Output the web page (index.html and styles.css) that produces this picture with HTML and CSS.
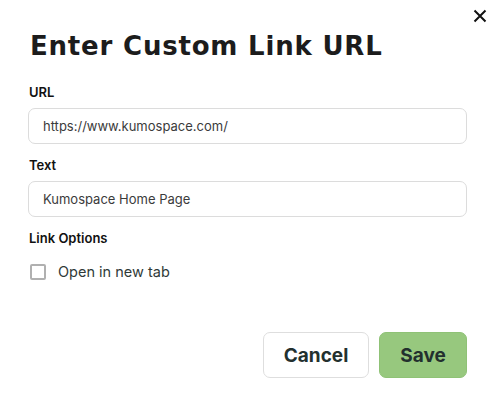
FILE: index.html
```html
<!DOCTYPE html>
<html>
<head>
<meta charset="utf-8">
<link rel="stylesheet" href="styles.css">
</head>
<body>
<div class="dialog">
  <button class="close" aria-label="Close">
    <svg width="14" height="14" viewBox="0 0 14 14"><path d="M1.5 1.5 L12.5 12.5 M12.5 1.5 L1.5 12.5" stroke="#111" stroke-width="2" fill="none"/></svg>
  </button>
  <h1 class="title">Enter Custom Link URL</h1>
  <div class="field">
    <label class="label">URL</label>
    <div class="input">https://www.kumospace.com/</div>
  </div>
  <div class="field">
    <label class="label">Text</label>
    <div class="input">Kumospace Home Page</div>
  </div>
  <div class="field">
    <div class="label">Link Options</div>
    <div class="check-row">
      <span class="checkbox"></span>
      <span class="check-text">Open in new tab</span>
    </div>
  </div>
  <div class="actions">
    <button class="btn btn-cancel">Cancel</button>
    <button class="btn btn-save">Save</button>
  </div>
</div>
</body>
</html>
```
FILE: styles.css
```css
* { box-sizing: border-box; }
html, body { margin: 0; padding: 0; background: #fff; }
body { font-family: Inter, "Noto Sans", sans-serif; color: #111; }
.dialog {
  position: relative;
  width: 494px;
  height: 400px;
  padding: 30px 27px 0 28px;
}
.close {
  position: absolute;
  top: 9px;
  right: 7px;
  width: 14px;
  height: 14px;
  padding: 0;
  border: 0;
  background: none;
  display: flex;
}
.title {
  margin: 0 0 0 2px;
  font-family: "DejaVu Sans", Inter, sans-serif;
  font-size: 26px;
  line-height: 32px;
  font-weight: 700;
  letter-spacing: 0.8px;
  color: #1c1c1c;
}
.field { margin-top: 22px; display: flex; flex-direction: column; }
.field + .field { margin-top: 13px; }
.label {
  font-size: 13px;
  line-height: 16px;
  font-weight: 600;
  color: #111;
  margin-left: 1px;
  margin-bottom: 8px;
}
.input {
  height: 36px;
  border: 1px solid #dcdcdc;
  border-radius: 7px;
  padding: 0 14px;
  display: flex;
  align-items: center;
  font-size: 13px;
  color: #3b3b3b;
}
.check-row {
  display: flex;
  align-items: center;
  gap: 12px;
  margin-top: 9px;
  margin-left: 2px;
}
.checkbox {
  width: 16px;
  height: 16px;
  border: 2px solid #b0b0b0;
  border-radius: 2px;
}
.check-text { font-size: 14.5px; color: #2f3a38; }
.actions {
  display: flex;
  justify-content: flex-end;
  gap: 10px;
  margin-top: 52px;
}
.btn {
  height: 46px;
  border-radius: 7px;
  font-family: Inter, "Noto Sans", sans-serif;
  font-size: 19px;
  font-weight: 700;
  color: #23302e;
  padding: 0;
}
.btn-cancel { width: 106px; background: #fff; border: 1px solid #dedede; }
.btn-save { width: 88px; background: #97c87e; border: 1px solid #8fc276; }
```
